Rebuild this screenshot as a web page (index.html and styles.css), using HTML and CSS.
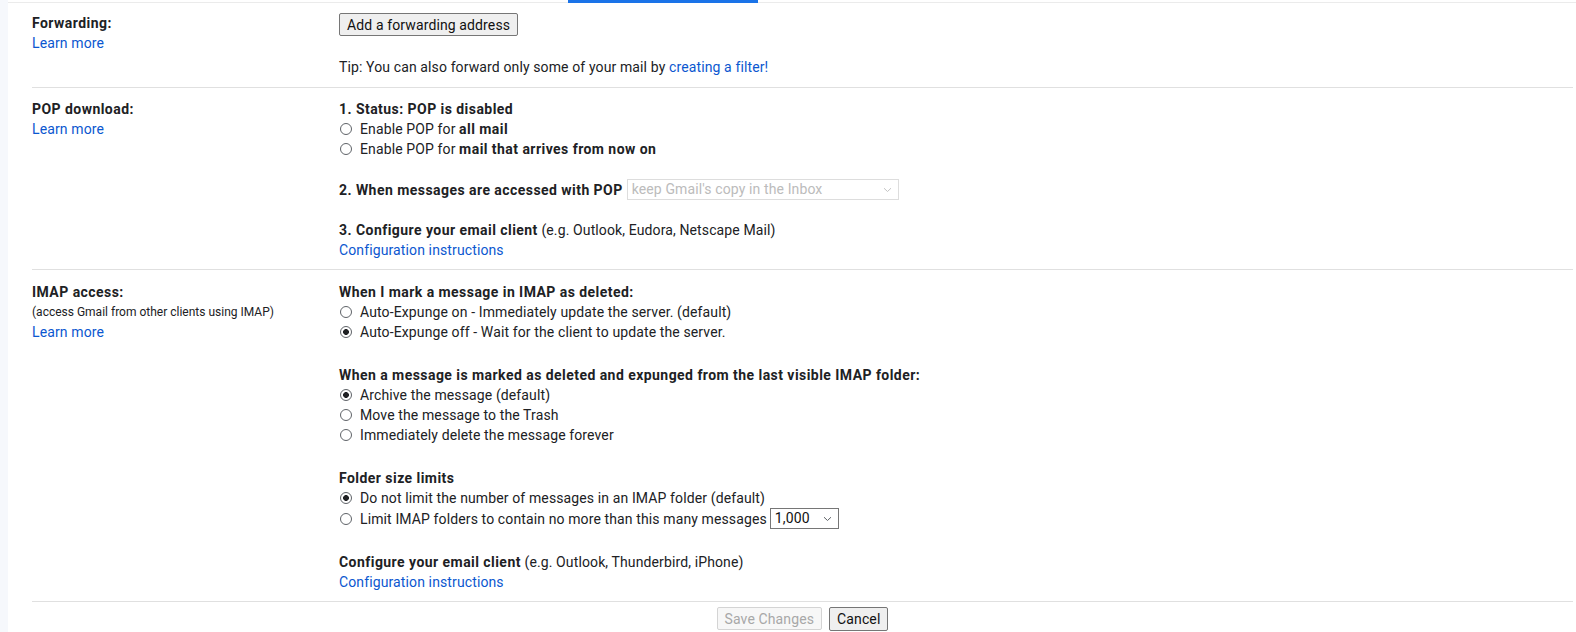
FILE: index.html
```html
<!DOCTYPE html>
<html lang="en">
<head>
<meta charset="utf-8">
<title>Forwarding and POP/IMAP</title>
<link rel="stylesheet" href="styles.css">
</head>
<body>
<div class="page">
  <div class="rail"></div>
  <main class="main">
    <div class="tabs"><div class="tab-active"></div></div>
    <div class="settings">
      <section class="row row-first">
        <div class="label">
          <div class="label-title">Forwarding:</div>
          <a class="link" href="#">Learn more</a>
        </div>
        <div class="content">
          <button class="btn" type="button">Add a forwarding address</button>
          <div class="tip">Tip: You can also forward only some of your mail by <a class="link" href="#">creating a filter!</a></div>
        </div>
      </section>

      <section class="row row-pop">
        <div class="label">
          <div class="label-title">POP download:</div>
          <a class="link" href="#">Learn more</a>
        </div>
        <div class="content">
          <div class="heading">1. Status: POP is disabled</div>
          <label class="opt"><input type="radio" name="pop" class="radio"><span>Enable POP for <b>all mail</b></span></label>
          <label class="opt"><input type="radio" name="pop" class="radio"><span>Enable POP for <b>mail that arrives from now on</b></span></label>
          <div class="group group-inline">
            <span class="heading">2. When messages are accessed with POP</span>
            <span class="select-wrap select-wrap-pop is-disabled">
              <select class="select select-pop" disabled>
                <option>keep Gmail's copy in the Inbox</option>
              </select>
              <svg class="chev" width="9" height="6" viewBox="0 0 9 6" aria-hidden="true"><path d="M1 1.2 L4.5 4.5 L8 1.2" fill="none" stroke="currentColor" stroke-width="1"/></svg>
            </span>
          </div>
          <div class="group">
            <div><b>3. Configure your email client</b> (e.g. Outlook, Eudora, Netscape Mail)</div>
            <a class="link" href="#">Configuration instructions</a>
          </div>
        </div>
      </section>

      <section class="row row-imap">
        <div class="label">
          <div class="label-title">IMAP access:</div>
          <div class="label-note">(access Gmail from other clients using IMAP)</div>
          <a class="link" href="#">Learn more</a>
        </div>
        <div class="content">
          <div class="heading">When I mark a message in IMAP as deleted:</div>
          <label class="opt"><input type="radio" name="exp" class="radio"><span>Auto-Expunge on - Immediately update the server. (default)</span></label>
          <label class="opt"><input type="radio" name="exp" class="radio" checked><span>Auto-Expunge off - Wait for the client to update the server.</span></label>
          <div class="group group-wide">
            <div class="heading">When a message is marked as deleted and expunged from the last visible IMAP folder:</div>
            <label class="opt"><input type="radio" name="del" class="radio" checked><span>Archive the message (default)</span></label>
            <label class="opt"><input type="radio" name="del" class="radio"><span>Move the message to the Trash</span></label>
            <label class="opt"><input type="radio" name="del" class="radio"><span>Immediately delete the message forever</span></label>
          </div>
          <div class="group group-wide">
            <div class="heading">Folder size limits</div>
            <label class="opt"><input type="radio" name="lim" class="radio" checked><span>Do not limit the number of messages in an IMAP folder (default)</span></label>
            <label class="opt opt-select"><input type="radio" name="lim" class="radio"><span>Limit IMAP folders to contain no more than this many messages</span>
              <span class="select-wrap">
                <select class="select select-limit">
                  <option>1,000</option>
                  <option>2,000</option>
                  <option>5,000</option>
                  <option>10,000</option>
                </select>
                <svg class="chev" width="9" height="6" viewBox="0 0 9 6" aria-hidden="true"><path d="M1 1.2 L4.5 4.5 L8 1.2" fill="none" stroke="currentColor" stroke-width="1"/></svg>
              </span>
            </label>
          </div>
          <div class="group group-wide">
            <div><b>Configure your email client</b> (e.g. Outlook, Thunderbird, iPhone)</div>
            <a class="link" href="#">Configuration instructions</a>
          </div>
        </div>
      </section>

      <div class="actions">
        <button class="btn" type="button" disabled>Save Changes</button>
        <button class="btn btn-cancel" type="button">Cancel</button>
      </div>
    </div>
  </main>
</div>
</body>
</html>
```

FILE: styles.css
```css
html {
  overflow: hidden;
}

html, body {
  margin: 0;
  padding: 0;
  background: #ffffff;
}

body {
  font-family: Roboto, "Liberation Sans", Arial, sans-serif;
  font-size: 14px;
  line-height: 20px;
  letter-spacing: 0.12px;
  color: #202124;
}

.page {
  display: flex;
  width: 1576px;
  min-height: 632px;
}

.rail {
  width: 8px;
  flex: 0 0 8px;
  background: #f6f8fc;
}

.main {
  flex: 1;
  background: #ffffff;
  min-width: 0;
}

.tabs {
  height: 2px;
  border-bottom: 1px solid #ebebeb;
}

.tab-active {
  margin-left: 560px;
  width: 190px;
  height: 3px;
  background: #1a73e8;
}

.settings {
  margin: 0 3px 0 24px;
}

.row {
  display: grid;
  grid-template-columns: 306px 1fr;
  border-bottom: 1px solid #e0e0e0;
}

.row-first {
  padding: 10px 0;
}

.row-pop {
  padding: 11px 0 9px;
}

.row-imap {
  padding: 12px 0 9px;
}

.label {
  display: flex;
  flex-direction: column;
  align-items: flex-start;
}

.label-title,
b,
.heading {
  font-weight: 700;
  letter-spacing: 0.45px;
}

.label-note {
  font-size: 12px;
  line-height: 20px;
  letter-spacing: 0;
}

.link {
  color: #0b57d0;
  text-decoration: none;
}

.content {
  display: flex;
  flex-direction: column;
  align-items: flex-start;
  padding-left: 1px;
}

.btn {
  font-family: Roboto, "Liberation Sans", Arial, sans-serif;
  font-size: 14px;
  line-height: 18px;
  letter-spacing: 0.12px;
  height: 23px;
  padding: 1px 7px;
  color: #111;
  background: #efefef;
  border: 1px solid #767676;
  border-radius: 2px;
}

.btn:disabled {
  color: #a8a8a8;
  background: #f7f7f7;
  border-color: #d4d4d4;
}

.btn-cancel {
  height: 24px;
}

.tip {
  margin-top: 21px;
}

.opt {
  display: flex;
  align-items: center;
  gap: 8px;
  line-height: 20px;
}

.radio {
  appearance: none;
  -webkit-appearance: none;
  width: 12px;
  height: 12px;
  margin: 0 0 0 1px;
  border: 1px solid #5f6368;
  border-radius: 50%;
  background: #fff;
  flex: 0 0 12px;
}

.radio:checked {
  background: radial-gradient(circle, #202124 0 2.6px, transparent 3.2px);
}

.group {
  margin-top: 20px;
  display: flex;
  flex-direction: column;
  align-items: flex-start;
}

.group-inline {
  flex-direction: row;
  align-items: center;
}

.group-wide {
  margin-top: 23px;
}

.select-wrap {
  position: relative;
  display: inline-flex;
  color: #5f6368;
}

.select-wrap.is-disabled {
  color: #c4c4c4;
}

.select-wrap-pop {
  margin-left: 4px;
}

.chev {
  position: absolute;
  right: 7px;
  top: 8px;
  pointer-events: none;
}

.select {
  appearance: none;
  -webkit-appearance: none;
  font-family: Roboto, "Liberation Sans", Arial, sans-serif;
  font-size: 14px;
  line-height: 19px;
  letter-spacing: 0.12px;
  height: 21px;
  padding: 0 18px 0 4px;
  color: #111;
  background: #fff;
  border: 1px solid #767676;
  border-radius: 0;
}

.select:disabled {
  color: #a0a0a0;
  border-color: #d0d0d0;
}

.select-pop {
  width: 272px;
}

.opt-select span.select-wrap {
  margin-left: 3px;
}

.opt-select {
  gap: 0;
}

.opt-select > span:first-of-type {
  margin-left: 8px;
}

.select-limit {
  width: 69px;
}

.actions {
  display: flex;
  justify-content: center;
  gap: 7px;
  padding-top: 5px;
}
```
